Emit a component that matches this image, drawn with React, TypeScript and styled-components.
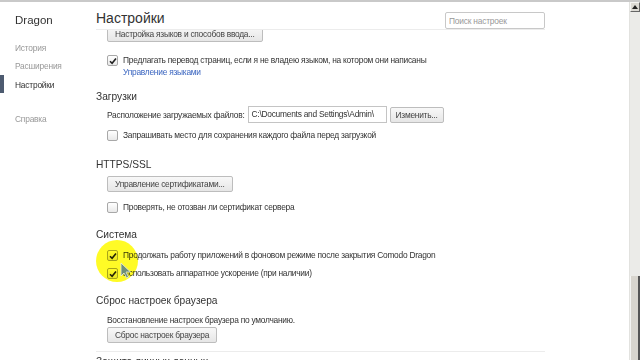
import React from "react";
import styled, { createGlobalStyle } from "styled-components";

const GlobalStyle = createGlobalStyle`
  html, body {
    margin: 0;
    padding: 0;
    background: #fff;
  }
  body {
    font-family: "Liberation Sans", Arial, sans-serif;
    color: #333;
  }
`;

const sideItems = [
  { label: "История", active: false, gap: 13 },
  { label: "Расширения", active: false, gap: 4 },
  { label: "Настройки", active: true, gap: 5 },
  { label: "Справка", active: false, gap: 20 },
];

function Check({ checked }: { checked?: boolean }) {
  return (
    <CheckBox>
      {checked && (
        <svg width="8" height="8" viewBox="0 0 8 8">
          <path d="M1 4.2 L3.1 6.3 L7 1.5" fill="none" stroke="#222" strokeWidth="1.6" />
        </svg>
      )}
    </CheckBox>
  );
}

function App() {
  return (
    <>
      <GlobalStyle />
      <Window>
        <Sidebar>
          <Brand>Dragon</Brand>
          {sideItems.map((item) => (
            <NavItem key={item.label} $active={item.active} $gap={item.gap}>
              {item.label}
            </NavItem>
          ))}
        </Sidebar>
        <Main>
          <Header>
            <Title>Настройки</Title>
            <Search placeholder="Поиск настроек" />
          </Header>
          <Content>
            <Body>
              <Button $top={-4}>Настройка языков и способов ввода...</Button>
              <CheckRow $top={12}>
                <Check checked />
                <div>
                  <div>Предлагать перевод страниц, если я не владею языком, на котором они написаны</div>
                  <Link>Управление языками</Link>
                </div>
              </CheckRow>
            </Body>

            <Heading $top={11}>Загрузки</Heading>
            <Body>
              <FieldRow>
                <span>Расположение загружаемых файлов:</span>
                <PathInput>C:\Documents and Settings\Admin\</PathInput>
                <Button $top={0} $pad={5}>Изменить...</Button>
              </FieldRow>
              <CheckRow $top={6}>
                <Check />
                <span>Запрашивать место для сохранения каждого файла перед загрузкой</span>
              </CheckRow>
            </Body>

            <Heading $top={16}>HTTPS/SSL</Heading>
            <Body>
              <Button $top={3}>Управление сертификатами...</Button>
              <CheckRow $top={9}>
                <Check />
                <span>Проверять, не отозван ли сертификат сервера</span>
              </CheckRow>
            </Body>

            <Heading $top={14}>Система</Heading>
            <Body>
              <CheckRow $top={6}>
                <Check checked />
                <span>Продолжать работу приложений в фоновом режиме после закрытия Comodo Dragon</span>
              </CheckRow>
              <CheckRow $top={6}>
                <Check checked />
                <span>Использовать аппаратное ускорение (при наличии)</span>
              </CheckRow>
            </Body>

            <Heading $top={14}>Сброс настроек браузера</Heading>
            <Body>
              <TextRow>Восстановление настроек браузера по умолчанию.</TextRow>
              <Button $top={0}>Сброс настроек браузера</Button>
            </Body>

            <Divider />
            <Heading $top={2}>Защита личных данных</Heading>
          </Content>
          <Highlight />
          <Cursor width="12" height="17" viewBox="0 0 12 17">
            <path d="M1 1 L1 14 L4 11 L6.5 16 L8.5 15 L6 10 L10.5 10 Z" fill="#6f8f78" stroke="#e8f0e0" strokeWidth="0.8" />
          </Cursor>
        </Main>
        <Scrollbar>
          <ScrollArrow>
            <svg width="6" height="4" viewBox="0 0 6 4">
              <path d="M0 4 L3 0 L6 4 Z" fill="#222" />
            </svg>
          </ScrollArrow>
          <Track />
          <Thumb />
        </Scrollbar>
      </Window>
    </>
  );
}

export default App;

const Window = styled.div`
  display: flex;
  width: 640px;
  height: 360px;
  overflow: hidden;
  border-top: 2px solid #c9c9c9;
  box-sizing: border-box;
  background: #fff;
`;

const Sidebar = styled.div`
  width: 96px;
  flex-shrink: 0;
  display: flex;
  flex-direction: column;
`;

const Brand = styled.div`
  padding-left: 15px;
  margin-top: 10px;
  font-size: 11.5px;
  line-height: 16px;
  color: #333;
`;

const NavItem = styled.div<{ $active?: boolean; $gap: number }>`
  position: relative;
  padding-left: 15px;
  margin-top: ${(p) => p.$gap}px;
  font-size: 8.4px;
  letter-spacing: -0.2px;
  line-height: 14px;
  color: ${(p) => (p.$active ? "#333" : "#999")};

  &::before {
    content: "";
    display: ${(p) => (p.$active ? "block" : "none")};
    position: absolute;
    left: 0;
    top: -3px;
    width: 4px;
    height: 18px;
    background: #4d5b70;
  }
`;

const Main = styled.div`
  position: relative;
  flex: 1;
  display: flex;
  flex-direction: column;
`;

const Header = styled.div`
  position: relative;
  z-index: 1;
  display: flex;
  align-items: center;
  justify-content: space-between;
  width: 449px;
  height: 31px;
  background: #fff;
  border-bottom: 1px solid #ececec;
`;

const Title = styled.div`
  font-size: 14px;
  color: #333;
  margin-top: 5px;
`;

const Search = styled.input`
  width: 100px;
  height: 17px;
  box-sizing: border-box;
  margin-top: 10px;
  border: 1px solid #c8c8c8;
  border-radius: 2px;
  padding: 0 3px;
  font-family: "Liberation Sans", Arial, sans-serif;
  font-size: 8.4px;
  letter-spacing: -0.2px;
  &::placeholder {
    color: #999;
  }
`;

const Content = styled.div`
  display: flex;
  flex-direction: column;
  font-size: 8.4px;
  letter-spacing: -0.25px;
  color: #333;
`;

const Body = styled.div`
  display: flex;
  flex-direction: column;
  align-items: flex-start;
  padding-left: 11px;
`;

const Heading = styled.div<{ $top: number }>`
  margin-top: ${(p) => p.$top}px;
  font-size: 10.2px;
  letter-spacing: 0;
  line-height: 16px;
  color: #333;
`;

const Button = styled.div<{ $top: number; $pad?: number }>`
  margin-top: ${(p) => p.$top}px;
  height: 16px;
  box-sizing: border-box;
  padding: 0 ${(p) => p.$pad ?? 7}px;
  display: flex;
  align-items: center;
  border: 1px solid #bdbdbd;
  border-radius: 2px;
  background: linear-gradient(#f8f8f8, #e6e6e6);
  color: #444;
  white-space: nowrap;
`;

const CheckRow = styled.div<{ $top: number }>`
  margin-top: ${(p) => p.$top}px;
  display: flex;
  align-items: flex-start;
  gap: 5px;
  line-height: 12px;
  white-space: nowrap;
`;

const CheckBox = styled.div`
  width: 9px;
  height: 9px;
  margin-top: 1px;
  flex-shrink: 0;
  border: 1px solid #a8a8a8;
  border-radius: 2px;
  background: linear-gradient(#fff, #e9e9e9);
  display: flex;
  align-items: center;
  justify-content: center;
`;

const Link = styled.div`
  color: #3a65c0;
`;

const FieldRow = styled.div`
  margin-top: 1px;
  display: flex;
  align-items: center;
  gap: 3px;
  white-space: nowrap;
`;

const PathInput = styled.div`
  width: 139px;
  height: 17px;
  box-sizing: border-box;
  border: 1px solid #c4c4c4;
  padding: 0 3px;
  line-height: 15px;
  overflow: hidden;
  color: #333;
`;

const TextRow = styled.div`
  margin-top: 4px;
  line-height: 14px;
`;

const Divider = styled.div`
  margin-top: 8px;
  width: 449px;
  height: 1px;
  background: #ececec;
`;

const Highlight = styled.div`
  position: absolute;
  left: 0px;
  top: 238px;
  width: 42px;
  height: 42px;
  border-radius: 50%;
  background: rgba(255, 250, 0, 0.85);
  mix-blend-mode: multiply;
`;

const Cursor = styled.svg`
  position: absolute;
  left: 24px;
  top: 260px;
`;

const Scrollbar = styled.div`
  width: 10px;
  flex-shrink: 0;
  display: flex;
  flex-direction: column;
  background: #ebebe8;
  border-left: 1px solid #e2e2df;
`;

const ScrollArrow = styled.div`
  height: 10px;
  display: flex;
  align-items: center;
  justify-content: center;
  background: #dcdad4;
  border: 1px solid #f4f4f2;
  border-right-color: #666;
  border-bottom-color: #666;
  box-sizing: border-box;
`;

const Track = styled.div`
  flex: 1;
`;

const Thumb = styled.div`
  height: 84px;
  background: #d8d5ce;
  border-left: 1px solid #f4f4f2;
  border-right: 2px solid #555;
  box-sizing: border-box;
`;
